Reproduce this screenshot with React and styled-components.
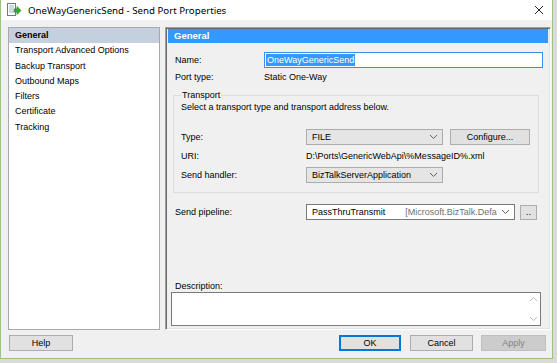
import React from 'react';
import styled, { createGlobalStyle } from 'styled-components';

const Global = createGlobalStyle`
  html, body { margin: 0; padding: 0; }
  body {
    width: 557px; height: 363px; overflow: hidden;
    background: #dadada;
    font-family: "Liberation Sans", Arial, sans-serif;
    font-size: 9px; color: #000;
  }
`;

const Page = styled.div`
  width: 557px; height: 363px;
  display: flex; align-items: flex-start;
  background: #dadada;
`;

const Window = styled.div`
  width: 551px; height: 358px;
  display: flex; flex-direction: column;
  border: 1px solid #9bc47d; border-top: none;
  background: #f0f0f0;
`;

const TitleBar = styled.div`
  height: 20px; flex: none;
  display: flex; align-items: center;
  background: #fff;
  padding: 0 8px 0 5px;
  gap: 6px;
`;

const Title = styled.div`
  flex: 1;
  font-family: "Noto Sans", "Open Sans", sans-serif;
  font-size: 9.7px; color: #000;
`;

const Body = styled.div`
  flex: 1; display: flex; flex-direction: column;
  padding: 7px 3px 0 7px;
`;

const Main = styled.div`
  height: 303px; display: flex; gap: 5px;
`;

const NavList = styled.div`
  width: 150px; flex: none;
  background: #fff;
  border: 1px solid #a9a9a9;
`;

const NavItem = styled.div`
  height: 15.3px; line-height: 15px;
  padding-left: 6px;
  font-weight: ${p => (p.$active ? 'bold' : 'normal')};
  background: ${p => (p.$active ? '#c4d0dd' : 'transparent')};
  white-space: nowrap;
`;

const Panel = styled.div`
  flex: 1; display: flex; flex-direction: column;
  border: 1px solid; border-color: #a0a0a0 #fff #fff #a0a0a0;
  box-shadow: inset 1px 1px 0 #696969, inset -1px -1px 0 #e3e3e3;
  padding: 1px 2px 3px 2px;
`;

const Header = styled.div`
  height: 14px; line-height: 14px; flex: none;
  background: #3399ff; color: #fff;
  font-weight: bold; font-size: 9.5px;
  padding-left: 6px;
`;

const Form = styled.div`
  flex: 1; display: flex; flex-direction: column;
  padding: 0 5px;
`;

const Row = styled.div`
  display: flex; align-items: center;
  height: ${p => p.$h || 16}px;
  margin-top: ${p => p.$mt || 0}px;
  padding-left: ${p => p.$pl || 0}px;
`;

const Label = styled.div`
  width: ${p => p.$w}px; flex: none; white-space: nowrap;
`;

const TextBox = styled.div`
  width: 276px; height: 14px;
  border: 1px solid #3a8fe6;
  background: #fff;
  display: flex; align-items: center; padding-left: 1px;
`;

const Selected = styled.span`
  background: #3399ff; color: #fff; line-height: 12px; padding: 0 1px;
`;

const Group = styled.fieldset`
  margin: 6px 0 0 0; padding: 0 0 9px 7px;
  width: 357px;
  border: 1px solid #dcdcdc;
  min-width: 0;
`;

const Legend = styled.legend`
  padding: 0 1px; margin-left: 0;
  font-size: 9px;
`;

const Hint = styled.div`
  height: 13px; line-height: 13px; margin-top: 1px;
`;

const DropList = styled.div`
  width: ${p => p.$w}px; height: 14px; flex: none;
  border: 1px solid ${p => (p.$white ? '#7a7a7a' : '#acacac')};
  background: ${p => (p.$white ? '#fff' : '#e5e5e5')};
  display: flex; align-items: center;
  padding-left: 5px; box-sizing: content-box;
`;

const DropText = styled.span`
  flex: 1; white-space: nowrap;
  display: flex;
`;

const Muted = styled.span`
  color: #707070; margin-left: ${p => p.$ml || 0}px;
`;

const Chevron = () => (
  <svg width="16" height="8" viewBox="0 0 16 8" style={{ flex: 'none' }}>
    <path d="M4 2 L7.5 5.5 L11 2" fill="none" stroke="#606060" strokeWidth="1" />
  </svg>
);

const Button = styled.div`
  width: ${p => p.$w}px; height: ${p => p.$h || 14}px; flex: none;
  margin-left: ${p => p.$ml || 0}px;
  display: flex; align-items: center; justify-content: center;
  background: ${p => (p.$disabled ? '#cccccc' : '#e1e1e1')};
  color: ${p => (p.$disabled ? '#838383' : '#000')};
  border: 1px solid ${p => (p.$primary ? '#0078d7' : p.$disabled ? '#bfbfbf' : '#adadad')};
  box-shadow: ${p => (p.$primary ? 'inset 0 0 0 1px #0078d7' : 'none')};
  font-size: 9px;
`;

const Spacer = styled.div`flex: 1;`;

const DescBox = styled.div`
  height: 32px; margin-left: -2px; width: 368px;
  border: 1px solid #7a7a7a; background: #fff;
  display: flex; justify-content: flex-end;
`;

const ScrollBar = styled.div`
  width: 13px; display: flex; flex-direction: column; justify-content: space-between;
  align-items: center; padding: 3px 0;
`;

const Footer = styled.div`
  display: flex; align-items: center; margin-top: 5px; height: 16px;
  padding-left: 1px;
`;

const FooterEnd = styled.div`width: 3px;`;

const Close = () => (
  <svg width="10" height="10" viewBox="0 0 10 10">
    <path d="M1 1 L9 9 M9 1 L1 9" stroke="#222" strokeWidth="1" />
  </svg>
);

const AppIcon = () => (
  <svg width="16" height="14" viewBox="0 0 16 14">
    <rect x="1.5" y="0.5" width="8" height="12" fill="#fff" stroke="#6a7b8c" />
    <path d="M3 3h5M3 5h5M3 7h4M3 9h5" stroke="#8aa0b5" strokeWidth="0.8" />
    <path d="M8 6 h3 v-2.5 l4 4 l-4 4 v-2.5 h-3z" fill="#39a935" stroke="#237a22" strokeWidth="0.6" />
  </svg>
);

const navItems = [
  'General',
  'Transport Advanced Options',
  'Backup Transport',
  'Outbound Maps',
  'Filters',
  'Certificate',
  'Tracking',
];

export default function App() {
  return (
    <>
      <Global />
      <Page>
        <Window>
          <TitleBar>
            <AppIcon />
            <Title>OneWayGenericSend - Send Port Properties</Title>
            <Close />
          </TitleBar>
          <Body>
            <Main>
              <NavList>
                {navItems.map((n, i) => (
                  <NavItem key={n} $active={i === 0}>{n}</NavItem>
                ))}
              </NavList>
              <Panel>
                <Header>General</Header>
                <Form>
                  <Row $mt={9} $pl={2}>
                    <Label $w={89}>Name:</Label>
                    <TextBox><Selected>OneWayGenericSend</Selected></TextBox>
                  </Row>
                  <Row $mt={2} $h={14} $pl={2}>
                    <Label $w={89}>Port type:</Label>
                    <span>Static One-Way</span>
                  </Row>
                  <Group>
                    <Legend>Transport</Legend>
                    <Hint>Select a transport type and transport address below.</Hint>
                    <Row $mt={15}>
                      <Label $w={125}>Type:</Label>
                      <DropList $w={130}><DropText>FILE</DropText><Chevron /></DropList>
                      <Button $w={78} $ml={7}>Configure...</Button>
                    </Row>
                    <Row $mt={3} $h={15}>
                      <Label $w={125}>URI:</Label>
                      <span>D:\Ports\GenericWebApi\%MessageID%.xml</span>
                    </Row>
                    <Row $mt={4}>
                      <Label $w={125}>Send handler:</Label>
                      <DropList $w={130}><DropText>BizTalkServerApplication</DropText><Chevron /></DropList>
                    </Row>
                  </Group>
                  <Row $mt={11} $pl={2}>
                    <Label $w={131}>Send pipeline:</Label>
                    <DropList $w={202} $white>
                      <DropText>PassThruTransmit<Muted $ml={20}>[Microsoft.BizTalk.Defa</Muted></DropText>
                      <Chevron />
                    </DropList>
                    <Button $w={15} $h={13} $ml={5}>..</Button>
                  </Row>
                  <Spacer />
                  <Row $h={13} $pl={2}>
                    <Label $w={120}>Description:</Label>
                  </Row>
                  <DescBox>
                    <ScrollBar>
                      <svg width="9" height="6" viewBox="0 0 9 6"><path d="M1 5 L4.5 1.5 L8 5" fill="none" stroke="#c0c0c0" /></svg>
                      <svg width="9" height="6" viewBox="0 0 9 6"><path d="M1 1 L4.5 4.5 L8 1" fill="none" stroke="#c0c0c0" /></svg>
                    </ScrollBar>
                  </DescBox>
                </Form>
              </Panel>
            </Main>
            <Footer>
              <Button $w={62}>Help</Button>
              <Spacer />
              <Button $w={60} $primary>OK</Button>
              <Button $w={61} $ml={9}>Cancel</Button>
              <Button $w={63} $ml={8} $disabled>Apply</Button>
              <FooterEnd />
            </Footer>
          </Body>
        </Window>
      </Page>
    </>
  );
}
